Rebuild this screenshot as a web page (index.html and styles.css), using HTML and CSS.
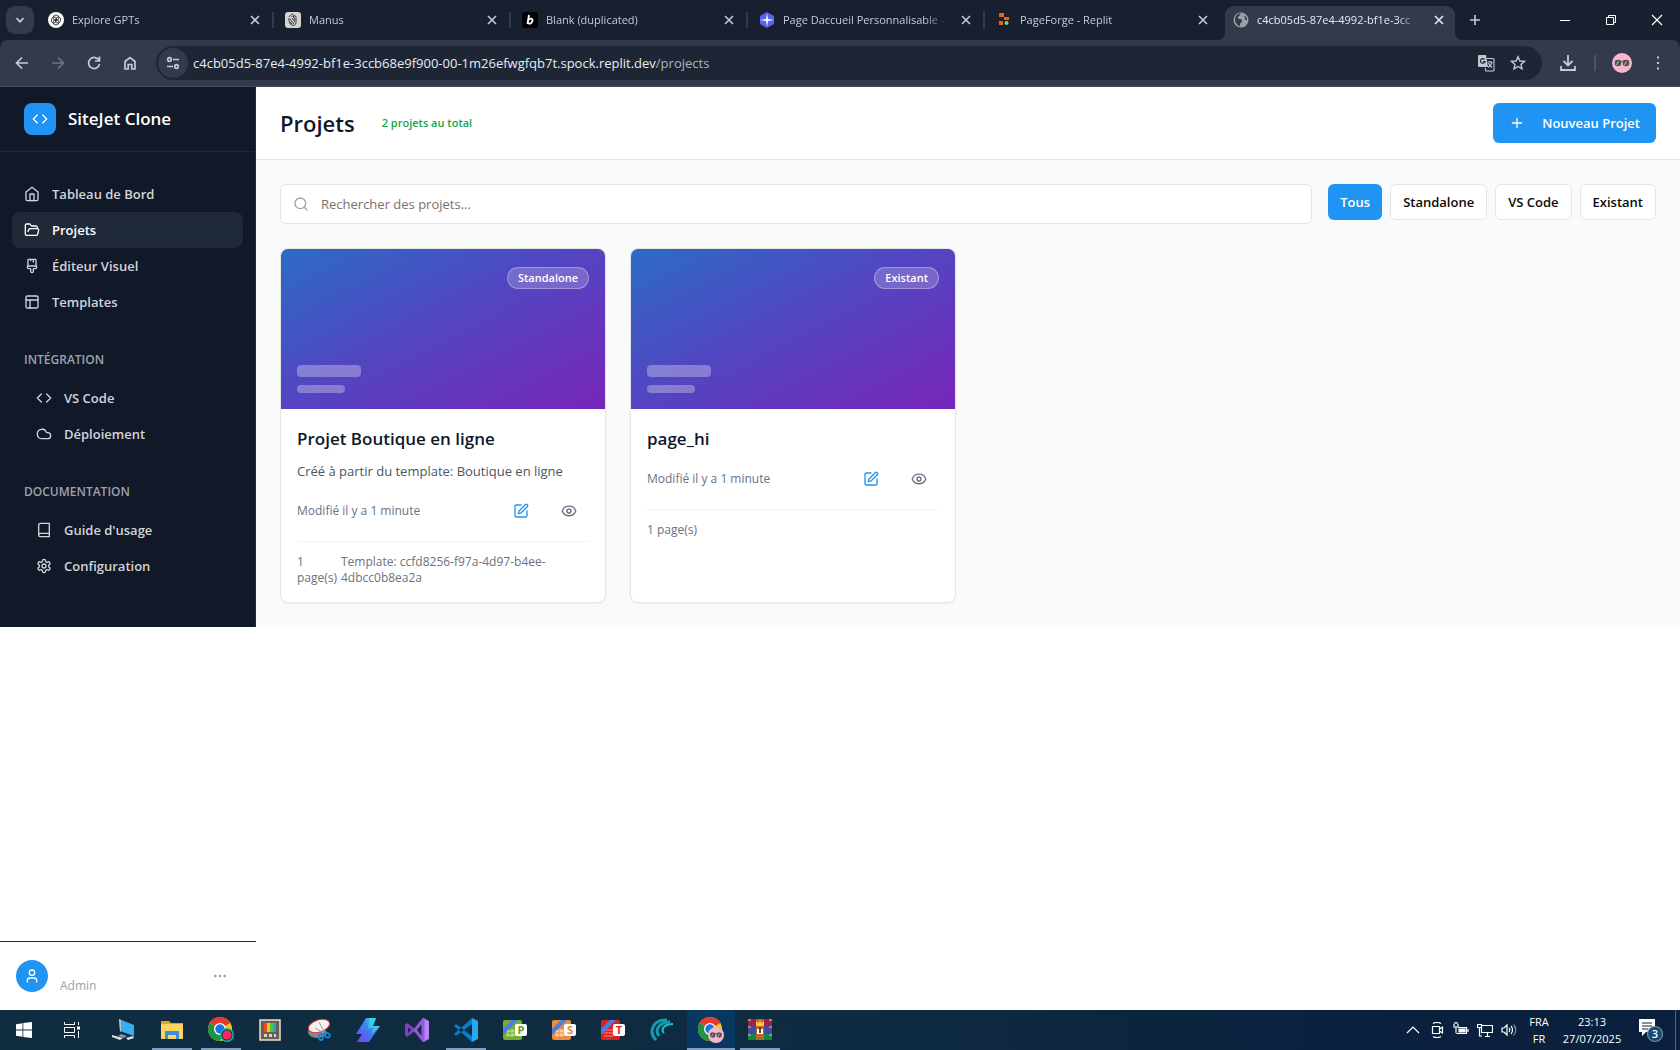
FILE: index.html
```html
<!DOCTYPE html>
<html lang="fr">
<head>
<meta charset="utf-8">
<title>Projets</title>
<link rel="stylesheet" href="styles.css">
</head>
<body>
<svg class="defs" aria-hidden="true">
  <defs>
    <linearGradient id="g-bolt" x1="0" y1="1" x2="1" y2="0"><stop offset="0" stop-color="#7a3ff0"/><stop offset=".5" stop-color="#3f7cf0"/><stop offset="1" stop-color="#35e6e0"/></linearGradient>
    <symbol id="x" viewBox="0 0 10 10"><path d="M1 1l8 8M9 1L1 9" fill="none" stroke="currentColor" stroke-width="1.6"/></symbol>
    <symbol id="code" viewBox="0 0 24 24"><path d="M16 18l6-6-6-6M8 6l-6 6 6 6"/></symbol>
    <symbol id="home" viewBox="0 0 24 24"><path d="M3 9l9-7 9 7v11a2 2 0 0 1-2 2H5a2 2 0 0 1-2-2z"/><path d="M9 22V12h6v10"/></symbol>
    <symbol id="folder" viewBox="0 0 24 24"><path d="M6 14l1.500-2.900A2 2 0 0 1 9.240 10H20a2 2 0 0 1 1.940 2.500l-1.540 6a2 2 0 0 1-1.950 1.500H4a2 2 0 0 1-2-2V5a2 2 0 0 1 2-2h3.900a2 2 0 0 1 1.690.9l.81 1.200a2 2 0 0 0 1.670.9H18a2 2 0 0 1 2 2v2"/></symbol>
    <symbol id="brush" viewBox="0 0 24 24"><path d="M10 2v2M14 2v4M17 2a1 1 0 0 1 1 1v9H6V3a1 1 0 0 1 1-1zM6 12a1 1 0 0 0-1 1v1a2 2 0 0 0 2 2h2a1 1 0 0 1 1 1v2.900a2 2 0 1 0 4 0V17a1 1 0 0 1 1-1h2a2 2 0 0 0 2-2v-1a1 1 0 0 0-1-1"/></symbol>
    <symbol id="layout" viewBox="0 0 24 24"><rect x="3" y="3" width="18" height="18" rx="2"/><path d="M3 9h18M9 21V9"/></symbol>
    <symbol id="cloud" viewBox="0 0 24 24"><path d="M17.500 19H9a7 7 0 1 1 6.710-9h1.790a4.500 4.500 0 1 1 0 9z"/></symbol>
    <symbol id="book" viewBox="0 0 24 24"><path d="M4 19.500v-15A2.500 2.500 0 0 1 6.500 2H20v20H6.500a2.500 2.500 0 0 1 0-5H20"/></symbol>
    <symbol id="gear" viewBox="0 0 24 24"><path d="M12.220 2h-.44a2 2 0 0 0-2 2v.18a2 2 0 0 1-1 1.730l-.43.25a2 2 0 0 1-2 0l-.15-.08a2 2 0 0 0-2.730.73l-.22.38a2 2 0 0 0 .73 2.730l.15.1a2 2 0 0 1 1 1.720v.51a2 2 0 0 1-1 1.740l-.15.09a2 2 0 0 0-.73 2.730l.22.38a2 2 0 0 0 2.730.73l.15-.08a2 2 0 0 1 2 0l.43.25a2 2 0 0 1 1 1.730V20a2 2 0 0 0 2 2h.44a2 2 0 0 0 2-2v-.18a2 2 0 0 1 1-1.730l.43-.25a2 2 0 0 1 2 0l.15.08a2 2 0 0 0 2.730-.73l.22-.39a2 2 0 0 0-.73-2.730l-.15-.08a2 2 0 0 1-1-1.740v-.5a2 2 0 0 1 1-1.740l.15-.09a2 2 0 0 0 .73-2.730l-.22-.38a2 2 0 0 0-2.730-.73l-.15.08a2 2 0 0 1-2 0l-.43-.25a2 2 0 0 1-1-1.730V4a2 2 0 0 0-2-2z"/><circle cx="12" cy="12" r="3"/></symbol>
    <symbol id="plus" viewBox="0 0 24 24"><path d="M5 12h14M12 5v14"/></symbol>
    <symbol id="search" viewBox="0 0 24 24"><circle cx="11" cy="11" r="8"/><path d="M21 21l-4.300-4.300"/></symbol>
    <symbol id="edit" viewBox="0 0 24 24"><path d="M12 3H5a2 2 0 0 0-2 2v14a2 2 0 0 0 2 2h14a2 2 0 0 0 2-2v-7"/><path d="M18.375 2.625a1 1 0 0 1 3 3l-9.013 9.014a2 2 0 0 1-.853.505l-2.873.84a.5.5 0 0 1-.62-.62l.84-2.873a2 2 0 0 1 .506-.852z"/></symbol>
    <symbol id="eye" viewBox="0 0 24 24"><path d="M2 12.300a1 1 0 0 1 0-.7 10.750 10.750 0 0 1 20 0 1 1 0 0 1 0 .7 10.750 10.750 0 0 1-20 0"/><circle cx="12" cy="12" r="3"/></symbol>
    <symbol id="user" viewBox="0 0 24 24"><path d="M19 21v-2a4 4 0 0 0-4-4H9a4 4 0 0 0-4 4v2"/><circle cx="12" cy="7" r="4"/></symbol>
    <symbol id="sunglasses" viewBox="0 0 20 20"><circle cx="10" cy="10" r="10" fill="#f9b5cc"/><circle cx="6" cy="10" r="3.300" fill="#4d5552"/><circle cx="14" cy="10" r="3.300" fill="#4d5552"/><path d="M3 8.200h14" stroke="#3a3f3d" stroke-width=".8"/><path d="M4.500 12l2-4M12.500 12l2-4" stroke="#b9c4bf" stroke-width="1"/></symbol>
    <symbol id="chrome" viewBox="0 0 24 24"><circle cx="12" cy="12" r="12" fill="#fbc116"/><path d="M12 12L1.600 6A12 12 0 0 1 22.400 6z" fill="#e33b2e"/><path d="M12 12L1.600 6A12 12 0 0 0 12 24l5-9z" fill="#229342"/><circle cx="12" cy="12" r="6" fill="#fff"/><circle cx="12" cy="12" r="4.700" fill="#1a73e8"/></symbol>
    <symbol id="replit" viewBox="0 0 16 16"><path d="M3 1h5v4H3zM8 5h5v3H8zM3 9h4v4H3z" fill="#f26207"/><circle cx="10.500" cy="11" r="2" fill="#6fdc8c"/></symbol>
  </defs>
</svg>

<header class="browser">
  <div class="tabstrip">
    <button class="tab-search" aria-label="Rechercher dans les onglets"><svg class="i10" viewBox="0 0 10 10"><path d="M1.500 3.200L5 6.700l3.500-3.500" fill="none" stroke="currentColor" stroke-width="1.700"/></svg></button>
    <div class="tabs">
      <div class="tab"><svg class="i16" viewBox="0 0 16 16"><circle cx="8" cy="8" r="8" fill="#fff"/><g fill="none" stroke="#222" stroke-width=".8"><ellipse cx="8" cy="5.700" rx="3" ry="2.500"/><ellipse cx="8" cy="10.300" rx="3" ry="2.500"/><ellipse cx="6" cy="8" rx="2.500" ry="3.200" transform="rotate(30 6 8)"/><ellipse cx="10" cy="8" rx="2.500" ry="3.200" transform="rotate(30 10 8)"/></g></svg><span>Explore GPTs</span><button aria-label="Fermer"><svg class="i10"><use href="#x"/></svg></button></div>
      <div class="tab"><svg class="i16" viewBox="0 0 16 16"><rect width="16" height="16" rx="3" fill="#d5d4d3"/><path d="M4 5c1-2 2-2 3 0M6 3c2-2 3 0 3 2M9 4c2-1 2 1 2 3v3c0 3-2 4-4 3-3-1-3-4-3-7M5 7l4 5M7 6l3 4M5 10l2 2M8 4l2 4" fill="none" stroke="#333" stroke-width="1"/></svg><span>Manus</span><button aria-label="Fermer"><svg class="i10"><use href="#x"/></svg></button></div>
      <div class="tab"><svg class="i16" viewBox="0 0 16 16"><rect width="16" height="16" rx="3" fill="#000"/><path d="M7 3L5.500 12M6 8.500c2-3 5-2 4.400.4-.5 2.800-3.400 3.600-4.800 1.600" fill="none" stroke="#fff" stroke-width="1.900"/></svg><span>Blank (duplicated)</span><button aria-label="Fermer"><svg class="i10"><use href="#x"/></svg></button></div>
      <div class="tab"><svg class="i16" viewBox="0 0 16 16"><path d="M8 0l7 4v8l-7 4-7-4V4z" fill="#5463f0"/><path d="M8 1.500l1 5.500 6 1-6 1-1 5.500L7 9 1 8l6-1z" fill="#fff"/></svg><span>Page Daccueil Personnalisable -</span><button aria-label="Fermer"><svg class="i10"><use href="#x"/></svg></button></div>
      <div class="tab"><svg class="i16"><use href="#replit"/></svg><span>PageForge - Replit</span><button aria-label="Fermer"><svg class="i10"><use href="#x"/></svg></button></div>
      <div class="tab active"><svg class="i16" viewBox="0 0 16 16"><circle cx="8" cy="8" r="7.500" fill="#9aa0a8"/><path d="M7 1.500c2 2-3 2.500-2 4.500s4 0 4 2.500-2 2-2 4 1 2 1 2c-4-1-6-4-6-7s2-5.500 5-6zM11 4c2 0 3 2 3 4-1 1-3-1-2-2s-2-1-1-2z" fill="#333a49"/></svg><span>c4cb05d5-87e4-4992-bf1e-3cc</span><button aria-label="Fermer"><svg class="i10"><use href="#x"/></svg></button></div>
    </div>
    <button class="new-tab" aria-label="Nouvel onglet"><svg class="i12" viewBox="0 0 12 12"><path d="M6 1v10M1 6h10" stroke="currentColor" stroke-width="1.600"/></svg></button>
    <div class="window-controls">
      <button aria-label="Réduire"><svg class="i12" viewBox="0 0 12 12"><path d="M1 6.500h10" stroke="#fff"/></svg></button>
      <button aria-label="Restaurer"><svg class="i12" viewBox="0 0 12 12"><path d="M1.500 3.500h7v7h-7zM3.500 3.500v-2h7v7h-2" fill="none" stroke="#fff"/></svg></button>
      <button aria-label="Fermer"><svg class="i12" viewBox="0 0 12 12"><path d="M1 1l10 10M11 1L1 11" stroke="#fff" stroke-width="1.200"/></svg></button>
    </div>
  </div>
  <div class="toolbar">
    <div class="nav-buttons">
      <button aria-label="Précédent"><svg class="i16" viewBox="0 0 16 16"><path d="M14 8H3M8 2.500L2.500 8 8 13.500"/></svg></button>
      <button aria-label="Suivant" disabled><svg class="i16" viewBox="0 0 16 16"><path d="M2 8h11M8 2.500L13.500 8 8 13.500"/></svg></button>
      <button aria-label="Actualiser"><svg class="i16" viewBox="0 0 16 16"><path d="M13 5.500A5.500 5.500 0 1 0 13.500 9M13.500 1.500v4.500H9"/></svg></button>
      <button aria-label="Accueil"><svg class="i16" viewBox="0 0 16 16"><path d="M3 14V6.500l5-4 5 4V14H9.800V9.500H6.200V14z"/></svg></button>
    </div>
    <div class="address">
      <button class="site-info" aria-label="Informations du site"><svg class="i16" viewBox="0 0 16 16"><circle cx="4.500" cy="4.500" r="1.800"/><path d="M8 4.500h6M2 11.500h6"/><circle cx="11.500" cy="11.500" r="1.800"/></svg></button>
      <p class="url">c4cb05d5-87e4-4992-bf1e-3ccb68e9f900-00-1m26efwgfqb7t.spock.replit.dev<span>/projects</span></p>
      <button aria-label="Traduire"><svg class="i18" viewBox="0 0 18 18"><path d="M2 1h7l2 12H2.500A1.500 1.500 0 0 1 1 11.500v-9A1.500 1.500 0 0 1 2 1z" fill="#c3c7d0" stroke="none"/><path d="M7.600 5.500A2.300 2.300 0 1 0 8 7.500H6" stroke="#1e2635" stroke-width="1.200"/><path d="M10 4.500h6a1 1 0 0 1 1 1V16a1 1 0 0 1-1 1H9l-1-3M10.500 8h5M13 7v1M15 8c-.5 3-2 4.500-4 5.500M11.500 9c.5 2 2 3.500 3.500 4.500" stroke-width="1.100"/></svg></button>
      <button aria-label="Favori"><svg class="i16" viewBox="0 0 16 16"><path d="M8 1.800l1.900 4.200 4.500.4-3.400 3 1 4.500L8 11.500l-4 2.400 1-4.500-3.400-3 4.500-.4z" stroke-width="1.400"/></svg></button>
    </div>
    <div class="tools">
      <button aria-label="Téléchargements"><svg class="i18" viewBox="0 0 18 18"><path d="M9 1v10M4.500 7L9 11.500 13.500 7M2 12v4h14v-4" stroke-width="1.800"/></svg></button>
      <i></i>
      <button aria-label="Profil"><svg class="i20"><use href="#sunglasses"/></svg></button>
      <button aria-label="Menu"><svg class="i16" viewBox="0 0 16 16"><path d="M7 1.500h2v2H7zM7 7h2v2H7zM7 12.500h2v2H7z" fill="#c3cadb" stroke="none"/></svg></button>
    </div>
  </div>
</header>

<div class="app">
  <aside class="sidebar">
    <div class="brand"><span class="logo"><svg class="icon"><use href="#code"/></svg></span><strong>SiteJet Clone</strong></div>
    <nav>
      <ul>
        <li><a href="#"><svg class="icon"><use href="#home"/></svg>Tableau de Bord</a></li>
        <li><a href="#" class="current" aria-current="page"><svg class="icon"><use href="#folder"/></svg>Projets</a></li>
        <li><a href="#"><svg class="icon"><use href="#brush"/></svg>Éditeur Visuel</a></li>
        <li><a href="#"><svg class="icon"><use href="#layout"/></svg>Templates</a></li>
      </ul>
      <h2>INTÉGRATION</h2>
      <ul class="nested">
        <li><a href="#"><svg class="icon"><use href="#code"/></svg>VS Code</a></li>
        <li><a href="#"><svg class="icon"><use href="#cloud"/></svg>Déploiement</a></li>
      </ul>
      <h2>DOCUMENTATION</h2>
      <ul class="nested">
        <li><a href="#"><svg class="icon"><use href="#book"/></svg>Guide d'usage</a></li>
        <li><a href="#"><svg class="icon"><use href="#gear"/></svg>Configuration</a></li>
      </ul>
    </nav>
  </aside>

  <main>
    <header class="page-head">
      <h1>Projets</h1><p>2 projets au total</p>
      <button class="primary"><svg class="icon"><use href="#plus"/></svg>Nouveau Projet</button>
    </header>
    <div class="content">
      <div class="controls">
        <label class="search"><svg class="icon"><use href="#search"/></svg><input type="text" aria-label="Rechercher des projets" placeholder="Rechercher des projets..."></label>
        <div class="filters"><button class="on">Tous</button><button>Standalone</button><button>VS Code</button><button>Existant</button></div>
      </div>
      <div class="grid">
        <article class="card">
          <div class="thumb"><span class="badge">Standalone</span><div class="bars"><i></i><i></i></div></div>
          <div class="body">
            <h3>Projet Boutique en ligne</h3>
            <p class="desc">Créé à partir du template: Boutique en ligne</p>
            <div class="row"><span>Modifié il y a 1 minute</span><button class="edit" aria-label="Modifier"><svg class="icon"><use href="#edit"/></svg></button><button aria-label="Aperçu"><svg class="icon"><use href="#eye"/></svg></button></div>
            <div class="meta"><span class="pages">1 page(s)</span><span class="template">Template: ccfd8256-f97a-4d97-b4ee-4dbcc0b8ea2a</span></div>
          </div>
        </article>
        <article class="card">
          <div class="thumb"><span class="badge">Existant</span><div class="bars"><i></i><i></i></div></div>
          <div class="body">
            <h3>page_hi</h3>
            <div class="row"><span>Modifié il y a 1 minute</span><button class="edit" aria-label="Modifier"><svg class="icon"><use href="#edit"/></svg></button><button aria-label="Aperçu"><svg class="icon"><use href="#eye"/></svg></button></div>
            <div class="meta"><span>1 page(s)</span></div>
          </div>
        </article>
      </div>
    </div>
  </main>

  <div class="account">
    <span class="avatar"><svg class="icon"><use href="#user"/></svg></span><span class="role">Admin</span>
    <button aria-label="Options du compte"><svg class="icon" viewBox="0 0 24 24"><g fill="currentColor"><circle cx="5" cy="12" r="1"/><circle cx="12" cy="12" r="1"/><circle cx="19" cy="12" r="1"/></g></svg></button>
  </div>
</div>

<footer class="taskbar">
  <div class="system">
    <button aria-label="Démarrer"><svg class="i16" viewBox="0 0 16 16"><path d="M0 2.200l6.500-1v6.300H0zM7.300 1L16 0v7.500H7.300zM0 8.500h6.500v6.300l-6.500-1zM7.300 8.500H16V16l-8.700-1z" fill="#fff"/></svg></button>
    <button aria-label="Affichage des tâches"><svg class="i16" viewBox="0 0 16 16"><path d="M.5 0v2.500h10V0M.5 16v-2.500h10V16M.5 5.500h10v5H.5zM14.500 0v3M14.500 9v7" fill="none" stroke="#fff"/><path d="M13 4.500h3v3h-3z" fill="#fff"/></svg></button>
  </div>
  <div class="apps">
    <button aria-label="Ce PC"><svg class="i24" viewBox="0 0 24 24"><path d="M8 1l15 6v11L9 13z" fill="#3aaef5"/><path d="M8 1l2 1v12l-1-1z" fill="#b4c3d0"/><path d="M10 16l6 2-3 2-6-2z" fill="#87939c"/><path d="M1 17l11 3-3 2-8-3zM15 20l7-2 1 2-6 2z" fill="#dde1e4"/></svg></button>
    <button class="open" aria-label="Explorateur de fichiers"><svg class="i24" viewBox="0 0 24 24"><path d="M1 3h8l2 2h12v16H1z" fill="#e8a317"/><path d="M1 6h22v15H1z" fill="#ffd362"/><path d="M5 13h14v8h-3v-4H8v4H5z" fill="#3b8ede"/></svg></button>
    <button class="open" aria-label="Chrome"><svg class="i26" viewBox="0 0 26 26"><use href="#chrome" width="24" height="24"/><circle cx="19" cy="18" r="7" fill="#10bd92"/><circle cx="19" cy="18" r="5.500" fill="#113044"/><circle cx="19" cy="18" r="4.500" fill="#ff275f"/></svg></button>
    <button aria-label="Microsoft Store"><svg class="i24" viewBox="0 0 24 24"><path d="M2 2h20v20H2z" fill="#676058" stroke="#eee2cd" stroke-width="1.500"/><path d="M6 5h3v9H6z" fill="#f04a24"/><path d="M9 5h3v9H9z" fill="#ffc400"/><path d="M12 5h3v9h-3z" fill="#47cc45"/><path d="M15 5h3v9h-3z" fill="#279ee8"/><path d="M6 16h3v3H6zM11 16h3v3h-3zM16 16h2v3h-2z" fill="#ded5c3"/></svg></button>
    <button aria-label="Outil Capture"><svg class="i24" viewBox="0 0 24 24"><ellipse cx="10" cy="14" rx="9" ry="6" fill="#828990"/><ellipse cx="12" cy="8" rx="11" ry="6" transform="rotate(-18 12 8)" fill="#f4f3f2" stroke="#df3434" stroke-width="1"/><path d="M12 4l7 13M8 10l9 5" stroke="#9aa1a8"/><g fill="none" stroke="#1687d4" stroke-width="1.800"><ellipse cx="14" cy="19" rx="2" ry="3"/><ellipse cx="20" cy="17" rx="3" ry="2" transform="rotate(35 20 17)"/></g></svg></button>
    <button aria-label="Bolt"><svg class="i24" viewBox="0 0 24 24"><path d="M10 0h10l-3 8h7L13 24H1l5-8H0z" fill="url(#g-bolt)"/><path d="M14 0h6l-3 8h7l-9 8 3-6h-6z" fill="#39dce5" opacity=".7"/></svg></button>
    <button aria-label="Visual Studio"><svg class="i24" viewBox="0 0 24 24"><path d="M0 7l2-2 16 12V7L2 19l-2-2z" fill="#7f42c7"/><path d="M3 9v6l3-3z" fill="#112c43"/><path d="M18 0l6 3v18l-6 3z" fill="#b687f4"/><path d="M10 12l8-10v20z" fill="#112c43" stroke="#9657d8" stroke-width="3"/></svg></button>
    <button class="open" aria-label="Visual Studio Code"><svg class="i24" viewBox="0 0 24 24"><path d="M0 8l2-2 16 12v6zM0 16l2 2L18 6V0z" fill="#087dcb"/><path d="M18 0l6 3v18l-6 3z" fill="#27a8f2"/></svg></button>
    <button aria-label="PlanMaker"><svg class="i24" viewBox="0 0 24 24"><rect y="2" width="19" height="20" rx="2" fill="#73ae2b"/><path d="M3 11h9v8H3zM3 15h9M7 11v8" fill="#bad791" stroke="#73ae2b"/><path d="M0 11L9 2h6L0 17z" fill="#477fe6"/><rect x="12" y="6" width="12" height="12" rx="2" fill="#fff"/><text x="18" y="16" fill="#609c20">P</text></svg></button>
    <button aria-label="Presentations"><svg class="i24" viewBox="0 0 24 24"><rect y="2" width="19" height="20" rx="2" fill="#ef8b3b"/><path d="M3 11h9v8H3zM3 15h9M7 11v8" fill="#ffd1a0" stroke="#ef8b3b"/><path d="M0 11L9 2h6L0 17z" fill="#477fe6"/><rect x="12" y="6" width="12" height="12" rx="2" fill="#fff"/><text x="18" y="16" fill="#ef842d">S</text></svg></button>
    <button aria-label="TextMaker"><svg class="i24" viewBox="0 0 24 24"><rect y="2" width="19" height="20" rx="2" fill="#da2126"/><path d="M3 12h9M3 15h9M3 18h9" stroke="#ff8584"/><path d="M0 11L9 2h6L0 17z" fill="#477fe6"/><rect x="12" y="6" width="12" height="12" rx="2" fill="#fff"/><text x="18" y="16" fill="#d51c23">T</text></svg></button>
    <button aria-label="Camo"><svg class="i24" viewBox="0 0 24 24"><g fill="none" stroke="#109eae" stroke-width="3"><path d="M6 22C-2 14 3 1 17 2"/><path d="M9 18C4 11 10 4 20 4"/><path d="M14 15c-4-4 1-9 9-9" stroke="#25bec2" stroke-width="2"/></g></svg></button>
    <button class="open active" aria-label="Chrome, profil"><svg class="i26" viewBox="0 0 26 26"><use href="#chrome" width="24" height="24"/><use href="#sunglasses" x="10" y="10" width="16" height="16"/></svg></button>
    <button class="open" aria-label="WinRAR"><svg class="i24" viewBox="0 0 24 24"><path d="M0 1h24v7H0z" fill="#a61d46"/><path d="M0 8h24v8H0z" fill="#4347a0"/><path d="M0 16h24v6H0z" fill="#158342"/><path d="M0 2h3M0 9h3M0 17h3M21 2h3M21 9h3M21 17h3" stroke="#e0d4a0"/><path d="M8 1h8v21H8z" fill="#b56628"/><path d="M8 3l3 2 1-4 1 4 3-2v5H8z" fill="#ffc43b"/><path d="M9 11h6v5H9z" fill="#fff"/><path d="M11 9h2v6h-2z" fill="#654238"/></svg></button>
  </div>
  <div class="tray">
    <button aria-label="Icônes cachées"><svg class="i16" viewBox="0 0 16 16"><path d="M2 11l6-6 6 6"/></svg></button>
    <button aria-label="Conférence"><svg class="i16" viewBox="0 0 16 16"><path d="M3.500 4.500h7v7h-7zM10.500 7l3-2v6l-3-2M4 1.500c2-1.500 6-1.500 8 0M4 14.500c2 1.500 6 1.500 8 0"/></svg></button>
    <button aria-label="Batterie"><svg class="i16" viewBox="0 0 16 16"><path d="M5.500 5.500h8v6h-10M15 7v3M1 2v3h4V2M2 0v2M4 0v2M3 5v6"/><path d="M6 7h6v3H6z" fill="#fff"/></svg></button>
    <button aria-label="Réseau"><svg class="i16" viewBox="0 0 16 16"><path d="M5 3.500h10.500v7H4.500V6M8 14.500h5M10.500 11v3M.5 2.500h4v3h-4zM2.500 6v8H5"/></svg></button>
    <button aria-label="Volume"><svg class="i16" viewBox="0 0 16 16"><path d="M1 6h2l3-3v10l-3-3H1zM8 6c1 1 1 3 0 4M10 4c2 2 2 6 0 8"/><path d="M12.500 2.500c3 3 3 8 0 11" opacity=".5"/></svg></button>
    <span class="lang">FRA<br>FR</span>
    <time>23:13<br>27/07/2025</time>
    <button class="notif" aria-label="Notifications"><svg viewBox="0 0 28 28"><path d="M2 3h16v13H9l-4 4v-4H2z" fill="#fff" stroke="none"/><path d="M5 7h10M5 10h10M5 13h6" stroke="#0a223d"/><circle cx="18" cy="18" r="7.500" fill="#164a70" stroke="#6f91ad"/><text x="18" y="22">3</text></svg></button>
    <i></i>
  </div>
</footer>
</body>
</html>
```
FILE: styles.css
```css
* { box-sizing: border-box; }
body { margin: 0; min-height: 100vh; display: flex; flex-direction: column; background: #fff; font: 13px/20px "Open Sans", "Noto Sans", sans-serif; color: #0f172a; }
h1, h2, h3, p, ul { margin: 0; padding: 0; }
ul { list-style: none; }
button { display: flex; align-items: center; justify-content: center; padding: 0; border: 0; background: none; font: inherit; color: inherit; }
a { color: inherit; text-decoration: none; }
svg { display: block; flex: none; }
.defs { position: absolute; width: 0; height: 0; }
.i10 { width: 10px; height: 10px; }
.i12 { width: 12px; height: 12px; }
.i16 { width: 16px; height: 16px; }
.i18 { width: 18px; height: 18px; }
.i20 { width: 20px; height: 20px; }
.i24 { width: 24px; height: 24px; }
.i26 { width: 26px; height: 26px; }
.icon { width: 16px; height: 16px; fill: none; stroke: currentColor; stroke-width: 2; stroke-linecap: round; stroke-linejoin: round; }

/* Browser window */
.browser { background: #18202f; color: #c3cadb; }
.tabstrip { display: flex; height: 40px; padding-left: 6px; }
.tab-search { width: 28px; height: 28px; margin-top: 6px; border-radius: 9px; background: #333b4a; }
.tabs { display: flex; flex: 0 1 1421px; min-width: 0; padding-left: 3px; }
.tab { position: relative; display: flex; align-items: center; flex: 0 1 237px; min-width: 0; height: 34px; margin-top: 6px; padding: 0 9px 6px 11px; gap: 8px; font-size: 11px; }
.tab:not(.active)::after { content: ""; width: 2px; height: 16px; background: #333b4a; position: absolute; right: 0; top: 6px; }
.tab:nth-last-child(2)::after { display: none; }
.tab span { flex: 1; overflow: hidden; white-space: nowrap; mask-image: linear-gradient(90deg, #000 calc(100% - 24px), transparent); }
.tab button { width: 20px; height: 20px; }
.tab.active { background: #333b4a; border-radius: 9px 9px 0 0; flex-basis: 230px; margin-left: 3px; padding-left: 8px; padding-right: 6px; color: #e5e9f2; }
.tab.active::before, .tab.active::after { content: ""; position: absolute; bottom: 0; width: 8px; height: 8px; }
.tab.active::before { right: 100%; background: radial-gradient(circle at 0 0, transparent 8px, #333b4a 8px); }
.tab.active::after { left: 100%; background: radial-gradient(circle at 100% 0, transparent 8px, #333b4a 8px); }
.new-tab { width: 28px; height: 28px; margin-top: 6px; margin-left: 6px; }
.window-controls { display: flex; margin-left: auto; }
.window-controls button { width: 46px; }
.toolbar { display: flex; align-items: center; height: 47px; padding: 0 4px; background: #333b4a; border-bottom: 1px solid #454b57; border-radius: 8px 8px 0 0; }
.toolbar svg { fill: none; stroke: #c3cadb; stroke-width: 1.7px; }
.nav-buttons, .tools { display: flex; align-items: center; }
.nav-buttons button { width: 36px; height: 34px; }
.nav-buttons button:disabled { opacity: .4; }
.address { display: flex; align-items: center; flex: 1; height: 34px; margin-left: 8px; padding: 0 8px 0 2px; border-radius: 17px; background: #1e2635; }
.address button { width: 32px; height: 32px; }
.address .site-info { width: 30px; height: 30px; border-radius: 15px; background: #333b4a; }
.url { flex: 1; min-width: 0; margin-left: 5px; overflow: hidden; white-space: nowrap; color: #e8ecf4; }
.url span { color: #aeb3c0; }
.tools button { width: 36px; height: 34px; }
.tools button:first-child { width: 52px; }
.tools i { width: 2px; height: 16px; background: #4c5463; margin-right: 8px; }
.toolbar .tools .i20 { stroke: none; }

/* Application shell */
.app { flex: 1; display: grid; grid-template: auto 1fr / 256px minmax(0, 1fr); }
.sidebar { background: #111827; border-right: 1px solid #1f2937; color: #d1d5db; font-weight: 600; }
.brand { display: flex; align-items: center; gap: 12px; padding: 16px 24px; height: 65px; border-bottom: 1px solid #1f2937; }
.brand strong { font-size: 17px; font-weight: 600; color: #fff; }
.logo { display: grid; place-items: center; width: 32px; height: 32px; border-radius: 8px; background: #2094f3; color: #fff; }
.sidebar nav { padding: 24px 12px; }
.sidebar a { display: flex; align-items: center; gap: 12px; height: 36px; padding: 0 12px; border-radius: 8px; }
.sidebar .current { background: #1f2937; color: #fff; }
.sidebar h2 { margin: 32px 12px 12px; font-size: 12px; line-height: 16px; font-weight: 600; color: #9ca3af; }
.nested { padding-left: 12px; }
.page-head { display: flex; align-items: center; gap: 27px; height: 73px; padding: 0 24px; border-bottom: 1px solid #e5e7eb; background: #fff; }
.page-head h1 { font-size: 22px; line-height: 32px; font-weight: 600; }
.page-head p { font-size: 11px; font-weight: 600; color: #16a34a; }
.primary { height: 40px; margin-left: auto; padding: 0 16px; gap: 17px; border-radius: 6px; background: #2094f3; color: #fff; font-weight: 600; }
main { display: flex; flex-direction: column; }
.content { flex: 1; padding: 24px; background: #f9fafb; }
.controls { display: flex; gap: 16px; align-items: flex-start; margin-bottom: 24px; }
.search { flex: 1; display: flex; align-items: center; gap: 12px; height: 40px; padding: 0 12px; border: 1px solid #e7e5e4; border-radius: 6px; background: #fff; color: #9ca3af; }
.search input { flex: 1; min-width: 0; padding: 0; border: 0; outline: 0; background: none; font: inherit; color: #0f172a; }
.search input::placeholder { color: #78716c; opacity: 1; }
.filters { display: flex; gap: 8px; }
.filters button { height: 36px; padding: 0 12px; border: 1px solid #e7e5e4; border-radius: 6px; background: #fff; color: #0c0a09; font-weight: 600; }
.filters .on { background: #2094f3; border: 0; color: #fff; }
.grid { display: grid; grid-template-columns: repeat(4, minmax(0, 1fr)); gap: 24px; }
.card { overflow: hidden; border: 1px solid #e7e5e4; border-radius: 8px; background: #fff; box-shadow: 0 1px 2px #0000000d; }
.thumb { display: flex; flex-direction: column; justify-content: space-between; height: 160px; padding: 18px 16px 16px; background: linear-gradient(153deg, #2c6bc7, #5147c1 45%, #7825b9); }
.badge { align-self: flex-end; height: 22px; padding: 0 10px; border: 1px solid #ffffff4d; border-radius: 11px; background: #ffffff33; color: #fff; font-size: 11px; line-height: 20px; font-weight: 600; }
.bars i { display: block; width: 64px; height: 12px; border-radius: 4px; background: #ffffff4d; }
.bars i + i { width: 48px; height: 8px; margin-top: 8px; }
.body { padding: 16px; }
.body h3 { margin-bottom: 8px; font-size: 17px; line-height: 28px; font-weight: 600; }
.desc { margin-bottom: 12px; color: #4b5563; }
.row { display: flex; align-items: center; gap: 8px; margin-bottom: 12px; color: #6b7280; font-size: 12px; }
.row span { flex: 1; }
.row button { width: 40px; height: 36px; }
.row .edit { color: #2094f3; }
.meta { display: flex; gap: 4px; padding-top: 12px; border-top: 1px solid #f3f4f6; color: #6b7280; font-size: 12px; line-height: 16px; }
.pages { width: 40px; }
.template { flex: 1; }
.account { grid-column: 1; align-self: end; display: flex; align-items: center; gap: 12px; height: 69px; padding: 0 16px; border-top: 1px solid #1f2937; color: #9ca3af; }
.avatar { display: grid; place-items: center; width: 32px; height: 32px; border-radius: 50%; background: #2094f3; color: #fff; }
.role { padding-top: 20px; font-size: 12px; }
.account button { width: 40px; height: 36px; margin-left: auto; }

/* Desktop taskbar */
.taskbar { display: flex; height: 40px; background: linear-gradient(90deg, #102c40, #0e2b41 50%, #0a203d 85%); color: #fff; }
.system, .apps, .tray { display: flex; }
.system { margin-right: 3px; }
.system button, .apps button { width: 48px; height: 40px; }
.apps { gap: 1px; }
.apps text { font: 700 11px "Open Sans", sans-serif; text-anchor: middle; }
.apps .open { background: linear-gradient(#809dc0, #809dc0) 50% 100% / 40px 2px no-repeat; }
.apps .active { background: linear-gradient(#809dc0, #809dc0) 50% 100% / 48px 2px no-repeat #073861; }
.tray { align-items: center; margin-left: auto; }
.tray svg { fill: none; stroke: #fff; stroke-width: 1.2px; }
.tray button { width: 24px; height: 40px; }
.tray .lang, .tray time { font-size: 11px; line-height: 17px; text-align: center; }
.lang { width: 36px; }
.tray time { width: 70px; white-space: nowrap; }
.tray .notif { width: 48px; }
.notif svg { width: 28px; height: 28px; }
.notif text { font: 600 11px "Open Sans", sans-serif; fill: #fff; stroke: none; text-anchor: middle; }
.tray i { width: 1px; height: 40px; margin-right: 4px; background: #53677b; }
```
